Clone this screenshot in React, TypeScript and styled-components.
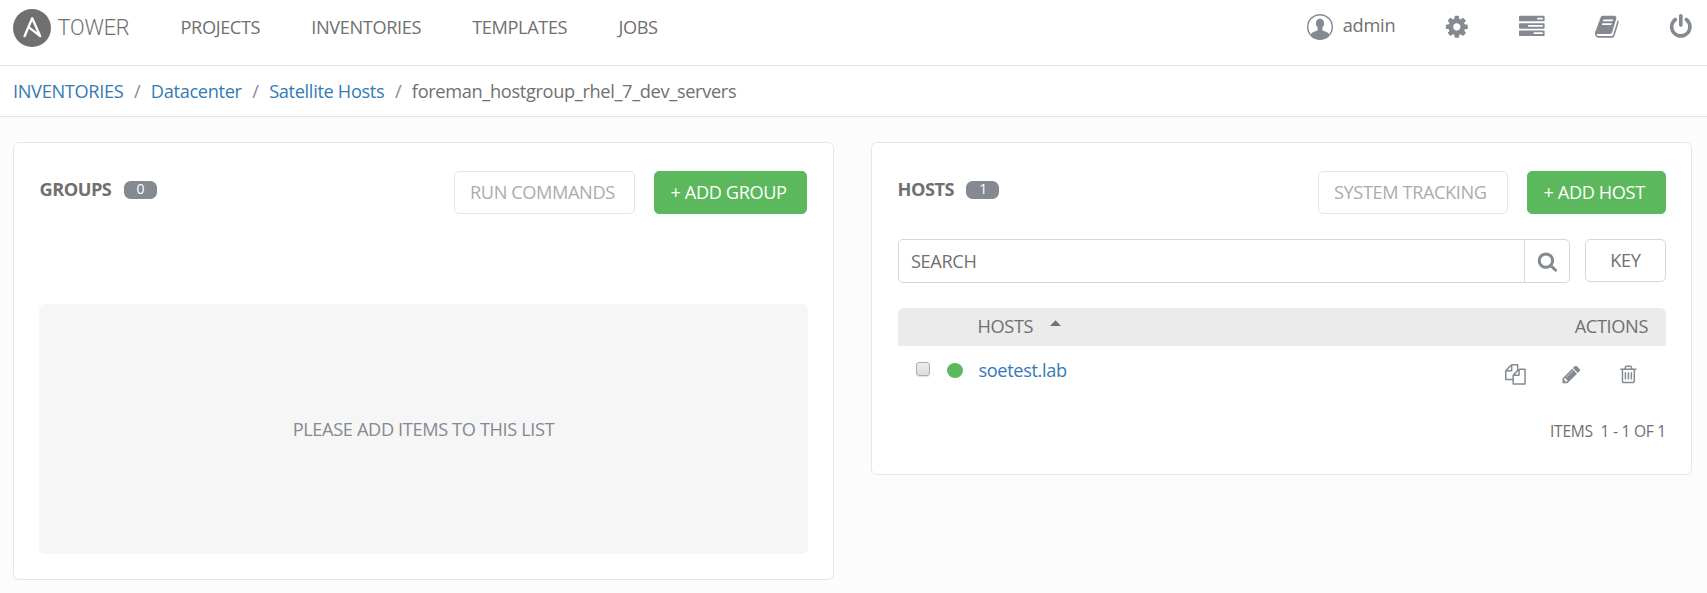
import React from "react";
import styled, { createGlobalStyle } from "styled-components";

const GlobalStyle = createGlobalStyle`
  * { box-sizing: border-box; }
  html, body { margin: 0; min-height: 100%; background: #fcfcfc; }
  body {
    font-family: "Open Sans", "Noto Sans", sans-serif;
    font-size: 18.2px;
    line-height: 26px;
    letter-spacing: -0.37px;
    color: #707070;
  }
  #root { height: 593px; overflow: hidden; }
`;

const Header = styled.header`
  display: flex;
  align-items: flex-start;
  height: 66px;
  padding: 0 13px 0 13px;
  background: #fff;
  border-bottom: 1px solid #e5e5e5;
`;

const Brand = styled.div`
  display: flex;
  align-items: center;
  width: 167.5px;
  height: 38px;
  margin-top: 9px;
  gap: 6.5px;
`;

const BrandName = styled.span`
  font-family: Roboto, sans-serif;
  font-weight: 300;
  font-size: 21.6px;
  line-height: 38px;
  letter-spacing: -0.15px;
`;

const Nav = styled.nav`
  display: flex;
  flex: 1;
  gap: 51.2px;
  padding-top: 14px;
  letter-spacing: -0.39px;
`;

const NavLink = styled.a`
  white-space: nowrap;
`;

const Tools = styled.div`
  display: flex;
  padding-top: 14px;
  color: #848992;
`;

const Tool = styled.a<{ $gap: number }>`
  display: flex;
  margin-left: ${(p) => p.$gap}px;
`;

const User = styled.div`
  display: flex;
  width: 137.3px;
  gap: 10px;
`;

const UserName = styled.span`
  color: #707070;
  line-height: 23px;
  letter-spacing: -0.2px;
`;

const Breadcrumb = styled.div`
  display: flex;
  align-items: center;
  height: 51px;
  padding: 0 13px 0 13px;
  background: #fff;
  border-bottom: 1px solid #e5e5e5;
`;

const Crumb = styled.span<{ $link?: boolean }>`
  color: ${(p) => (p.$link ? "#337ab7" : "#707070")};
  letter-spacing: -0.33px;
  white-space: nowrap;
`;

const Slash = styled.span`
  padding: 0 10.6px;
  color: #848992;
`;

const Main = styled.main`
  display: flex;
  align-items: flex-start;
  gap: 37px;
  padding: 25px 15px 0 13px;
`;

const Panel = styled.section<{ $height: number; $padRight: number }>`
  width: 821px;
  height: ${(p) => p.$height}px;
  padding: 28px ${(p) => p.$padRight}px 25px 26px;
  background: #fff;
  border: 1px solid #e6e6e6;
  border-radius: 6px;
`;

const PanelHeader = styled.div`
  display: flex;
  align-items: flex-start;
  height: 43px;
`;

const Title = styled.h2`
  margin: 5px 12.5px 0 -0.5px;
  font-size: 18.2px;
  line-height: 26px;
  font-weight: 700;
  letter-spacing: -0.5px;
`;

const Badge = styled.span`
  width: 33px;
  height: 18px;
  margin: 10px auto 0 0;
  border-radius: 6.5px;
  background: #848992;
  color: #fff;
  font-size: 14px;
  line-height: 16px;
  text-align: center;
`;

const Button = styled.button<{ $primary?: boolean; $width: number }>`
  width: ${(p) => p.$width}px;
  height: 43px;
  margin: 0 0 0 19px;
  padding: 0 0 2px ${(p) => (p.$primary ? 15.5 : 15)}px;
  border: 1px solid ${(p) => (p.$primary ? "#5cb85c" : "#e5e5e5")};
  border-radius: 5px;
  background: ${(p) => (p.$primary ? "#5cb85c" : "#fff")};
  color: ${(p) => (p.$primary ? "#fff" : "#acacac")};
  font: inherit;
  letter-spacing: -0.4px;
  text-align: left;
  white-space: nowrap;
`;

const EmptyList = styled.div`
  display: flex;
  align-items: center;
  justify-content: center;
  height: 250px;
  margin: 90px -1px 0;
  border-radius: 6px;
  background: #f6f6f6;
  color: #848992;
`;

const SearchRow = styled.div`
  display: flex;
  gap: 15px;
  margin-top: 25px;
`;

const SearchBox = styled.div`
  display: flex;
  width: 672px;
  height: 44px;
  border: 1px solid #d7d7d7;
  border-radius: 5px;
  overflow: hidden;
`;

const SearchInput = styled.span`
  flex: 1;
  padding: 8px 12px;
`;

const SearchButton = styled.span`
  display: flex;
  align-items: center;
  justify-content: center;
  width: 45px;
  border-left: 1px solid #d7d7d7;
  color: #848992;
`;

const KeyButton = styled.button`
  width: 81px;
  height: 43px;
  padding: 0 0 2px;
  border: 1px solid #d7d7d7;
  border-radius: 5px;
  background: #fff;
  color: #707070;
  font: inherit;
  letter-spacing: -0.37px;
`;

const TableHead = styled.div`
  display: flex;
  height: 38px;
  margin-top: 25px;
  padding: 5px 18px 0 79.5px;
  border-radius: 6px 6px 0 0;
  background: #ebebeb;
`;

const SortCaret = styled.svg`
  margin: 6.5px auto 0 16.5px;
`;

const Row = styled.div`
  display: flex;
  align-items: flex-start;
  height: 60px;
  padding-left: 18px;
`;

const Checkbox = styled.span`
  width: 14px;
  height: 14px;
  margin-top: 16px;
  border: 1px solid #adadad;
  border-radius: 3px;
  background: linear-gradient(#ececec, #dcdcdc);
  box-shadow: 0 1px 1px rgba(0, 0, 0, 0.12);
`;

const StatusDot = styled.span`
  width: 16px;
  height: 15.4px;
  margin: 16.8px 15.5px 0 17px;
  border-radius: 50%;
  background: #5cb85c;
`;

const HostLink = styled.a`
  margin: 11px auto 0 0;
  color: #337ab7;
`;

const Actions = styled.div`
  display: flex;
  width: 161px;
  padding-top: 17.5px;
  gap: 35.7px;
  color: #848992;
`;

const Footer = styled.div`
  margin-top: 12px;
  font-size: 15.6px;
  letter-spacing: -0.26px;
  text-align: right;
  white-space: pre;
`;

const Glyph = styled.svg`
  flex: none;
  overflow: visible;
`;

const icons = {
  cog: "M1152 896q0-106-75-181t-181-75-181 75-75 181 75 181 181 75 181-75 75-181zm512-109v222q0 12-8 23t-20 13l-185 28q-19 54-39 91 35 50 107 138 10 12 10 25t-9 23q-27 37-99 108t-94 71q-12 0-26-9l-138-108q-44 23-91 38-16 136-29 186-7 28-36 28h-222q-14 0-24.5-8.5t-11.5-21.5l-28-184q-49-16-90-37l-141 107q-10 9-25 9-14 0-25-11-126-114-165-168-7-10-7-23 0-12 8-23 15-21 51-66.5t54-70.5q-27-50-41-99l-183-27q-13-2-21-12.5t-8-23.5v-222q0-12 8-23t19-13l186-28q14-46 39-92-40-57-107-138-10-12-10-24 0-10 9-23 26-36 98.5-107.5t94.5-71.5q13 0 26 10l138 107q44-23 91-38 16-136 29-186 7-28 36-28h222q14 0 24.5 8.5t11.5 21.5l28 184q49 16 90 37l142-107q9-9 24-9 13 0 25 10 129 119 165 170 7 8 7 22 0 12-8 23-15 21-51 66.5t-54 70.5q26 50 41 98l183 28q13 2 21 12.5t8 23.5z",
  tasks: "M1024 1408h640v-128h-640v128zm-384-512h1024v-128h-1024v128zm640-512h384v-128h-384v128zm512 832v256q0 26-19 45t-45 19h-1664q-26 0-45-19t-19-45v-256q0-26 19-45t45-19h1664q26 0 45 19t19 45zm0-512v256q0 26-19 45t-45 19h-1664q-26 0-45-19t-19-45v-256q0-26 19-45t45-19h1664q26 0 45 19t19 45zm0-512v256q0 26-19 45t-45 19h-1664q-26 0-45-19t-19-45v-256q0-26 19-45t45-19h1664q26 0 45 19t19 45z",
  book: "M1703 478q40 57 18 129l-275 906q-19 64-76.5 107.5t-122.5 43.5h-923q-77 0-148.5-53.5t-99.5-131.5q-24-67-2-127 0-4 3-27t4-37q1-8-3-21.5t-3-19.5q2-11 8-21t16.5-23.5 16.5-23.5q23-38 45-91.5t30-91.5q3-10 .5-30t-.5-28q3-11 17-28t17-23q21-36 42-92t25-90q1-9-2.5-32t.5-28q4-13 22-30.5t22-22.5q19-26 42.5-84.5t27.5-96.5q1-8-3-25.5t-2-26.5q2-8 9-18t18-23 17-21q8-12 16.5-30.5t15-35 16-36 19.5-32 26.5-23.5 36-11.5 47.5 5.5l-1 3q38-9 51-9h761q74 0 114 56t18 130l-274 906q-36 119-71.5 153.5t-128.5 34.5h-869q-27 0-38 15-11 16-1 43 24 70 144 70h923q29 0 56-15.5t35-41.5l300-987q7-22 5-57 38 15 59 43zm-1064 2q-4 13 2 22.5t20 9.5h608q13 0 25.5-9.5t16.5-22.5l21-64q4-13-2-22.5t-20-9.5h-608q-13 0-25.5 9.5t-16.5 22.5zm-83 256q-4 13 2 22.5t20 9.5h608q13 0 25.5-9.5t16.5-22.5l21-64q4-13-2-22.5t-20-9.5h-608q-13 0-25.5 9.5t-16.5 22.5z",
  power: "M1664 896q0 156-61 298t-164 245-245 164-298 61-298-61-245-164-164-245-61-298q0-182 80.5-343t226.5-270q43-32 95.5-25t83.5 50q32 42 24.5 94.5t-49.5 84.5q-98 74-151.5 181t-53.5 228q0 104 40.5 198.5t109.5 163.5 163.5 109.5 198.5 40.5 198.5-40.5 163.5-109.5 109.5-163.5 40.5-198.5q0-121-53.5-228t-151.5-181q-42-32-49.5-84.5t24.5-94.5q31-43 84-50t95 25q146 109 226.5 270t80.5 343zm-640-768v640q0 52-38 90t-90 38-90-38-38-90v-640q0-52 38-90t90-38 90 38 38 90z",
  search: "M1216 832q0-185-131.5-316.5t-316.5-131.5-316.5 131.5-131.5 316.5 131.5 316.5 316.5 131.5 316.5-131.5 131.5-316.5zm512 832q0 52-38 90t-90 38q-54 0-90-38l-343-342q-179 124-399 124-143 0-273.5-55.5t-225-150-150-225-55.5-273.5 55.5-273.5 150-225 225-150 273.5-55.5 273.5 55.5 225 150 150 225 55.5 273.5q0 220-124 399l343 343q37 37 37 90z",
  copy: "M1696 384q40 0 68 28t28 68v1216q0 40-28 68t-68 28h-960q-40 0-68-28t-28-68v-288h-544q-40 0-68-28t-28-68v-672q0-40 20-88t48-76l408-408q28-28 76-48t88-20h416q40 0 68 28t28 68v328q68-40 128-40h416zm-544 213l-299 299h299v-299zm-640-384l-299 299h299v-299zm196 647l316-316v-416h-384v416q0 40-28 68t-68 28h-416v640h512v-256q0-40 20-88t48-76zm956 804v-1152h-384v416q0 40-28 68t-68 28h-416v640h896z",
  pencil: "M491 1536l91-91-235-235-91 91v107h128v128h107zm523-928q0-22-22-22-10 0-17 7l-542 542q-7 7-7 17 0 22 22 22 10 0 17-7l542-542q7-7 7-17zm-54-192l416 416-832 832h-416v-416zm683 96q0 53-37 90l-166 166-416-416 166-165q36-38 90-38 53 0 91 38l235 234q37 39 37 91z",
  trash: "M704 736v576q0 14-9 23t-23 9h-64q-14 0-23-9t-9-23v-576q0-14 9-23t23-9h64q14 0 23 9t9 23zm256 0v576q0 14-9 23t-23 9h-64q-14 0-23-9t-9-23v-576q0-14 9-23t23-9h64q14 0 23 9t9 23zm256 0v576q0 14-9 23t-23 9h-64q-14 0-23-9t-9-23v-576q0-14 9-23t23-9h64q14 0 23 9t9 23zm128 724v-948h-896v948q0 22 7 40.5t14.5 27 10.5 8.5h832q3 0 10.5-8.5t14.5-27 7-40.5zm-672-1076h448l-48-117q-7-9-17-11h-317q-10 2-17 11zm928 32v64q0 14-9 23t-23 9h-96v948q0 83-47 143.5t-113 60.5h-832q-66 0-113-58.5t-47-141.5v-952h-96q-14 0-23-9t-9-23v-64q0-14 9-23t23-9h309l70-167q15-37 54-63t79-26h320q40 0 79 26t54 63l70 167h309q14 0 23 9t9 23z",
};

const Icon = ({ name, size }: { name: keyof typeof icons; size: number }) => (
  <Glyph width={size} height={size} viewBox="0 0 1792 1792" fill="currentColor">
    <path d={icons[name]} />
  </Glyph>
);

const Logo = () => (
  <svg width="38" height="38" viewBox="0 0 38 38">
    <circle cx="19" cy="19" r="19" fill="#707070" />
    <path
      d="M11.2 28 L19.2 9.3 L27.2 27.2 L15.6 18.2"
      fill="none"
      stroke="#fff"
      strokeWidth="2.3"
      strokeLinejoin="round"
    />
  </svg>
);

const UserIcon = () => (
  <svg width="26" height="26" viewBox="0 0 26 26">
    <circle cx="13" cy="13" r="12.3" fill="none" stroke="#848992" strokeWidth="1.4" />
    <path
      d="M13 4.7c2.600 0 4 1.700 3.900 4.200 0 .6.3.9.1 1.800-.1.7-.6.9-.8 1.500-.2.8-.6 1.300-.9 1.800v2.100c.8 1.100 3.400 1.400 5.200 2.400 1 .6 1.500 1.500 1.700 2.500A12.300 12.300 0 0 1 13 25.300 12.300 12.300 0 0 1 3.800 21c.2-1 .7-1.900 1.700-2.500 1.800-1 4.400-1.300 5.200-2.400V14c-.3-.5-.7-1-.9-1.800-.2-.6-.7-.8-.8-1.500-.2-.9.1-1.200.1-1.800C9 6.400 10.400 4.700 13 4.700z"
      fill="#848992"
    />
  </svg>
);

export default function App() {
  return (
    <>
      <GlobalStyle />
      <Header>
        <Brand>
          <Logo />
          <BrandName>TOWER</BrandName>
        </Brand>
        <Nav>
          <NavLink>PROJECTS</NavLink>
          <NavLink>INVENTORIES</NavLink>
          <NavLink>TEMPLATES</NavLink>
          <NavLink>JOBS</NavLink>
        </Nav>
        <Tools>
          <User>
            <UserIcon />
            <UserName>admin</UserName>
          </User>
          <Tool $gap={0}><Icon name="cog" size={25.6} /></Tool>
          <Tool $gap={49.4}><Icon name="tasks" size={25.6} /></Tool>
          <Tool $gap={49}><Icon name="book" size={25.6} /></Tool>
          <Tool $gap={49.3}><Icon name="power" size={25.6} /></Tool>
        </Tools>
      </Header>
      <Breadcrumb>
        <Crumb $link>INVENTORIES</Crumb>
        <Slash>/</Slash>
        <Crumb $link>Datacenter</Crumb>
        <Slash>/</Slash>
        <Crumb $link>Satellite Hosts</Crumb>
        <Slash>/</Slash>
        <Crumb>foreman_hostgroup_rhel_7_dev_servers</Crumb>
      </Breadcrumb>
      <Main>
        <Panel $height={438} $padRight={26}>
          <PanelHeader>
            <Title>GROUPS</Title>
            <Badge>0</Badge>
            <Button $width={181}>RUN COMMANDS</Button>
            <Button $primary $width={153}>+ ADD GROUP</Button>
          </PanelHeader>
          <EmptyList>PLEASE ADD ITEMS TO THIS LIST</EmptyList>
        </Panel>
        <Panel $height={333} $padRight={25}>
          <PanelHeader>
            <Title>HOSTS</Title>
            <Badge>1</Badge>
            <Button $width={190}>SYSTEM TRACKING</Button>
            <Button $primary $width={139}>+ ADD HOST</Button>
          </PanelHeader>
          <SearchRow>
            <SearchBox>
              <SearchInput>SEARCH</SearchInput>
              <SearchButton><Icon name="search" size={20.8} /></SearchButton>
            </SearchBox>
            <KeyButton>KEY</KeyButton>
          </SearchRow>
          <TableHead>
            <span>HOSTS</span>
            <SortCaret width="11" height="6" viewBox="0 0 11 6">
              <path d="M0 6 L5.500 0.300 L11 6z" fill="#707070" />
            </SortCaret>
            <span>ACTIONS</span>
          </TableHead>
          <Row>
            <Checkbox />
            <StatusDot />
            <HostLink>soetest.lab</HostLink>
            <Actions>
              <Icon name="copy" size={20.8} />
              <Icon name="pencil" size={20.8} />
              <Icon name="trash" size={20.8} />
            </Actions>
          </Row>
          <Footer>{"ITEMS  1 - 1 OF 1"}</Footer>
        </Panel>
      </Main>
    </>
  );
}
